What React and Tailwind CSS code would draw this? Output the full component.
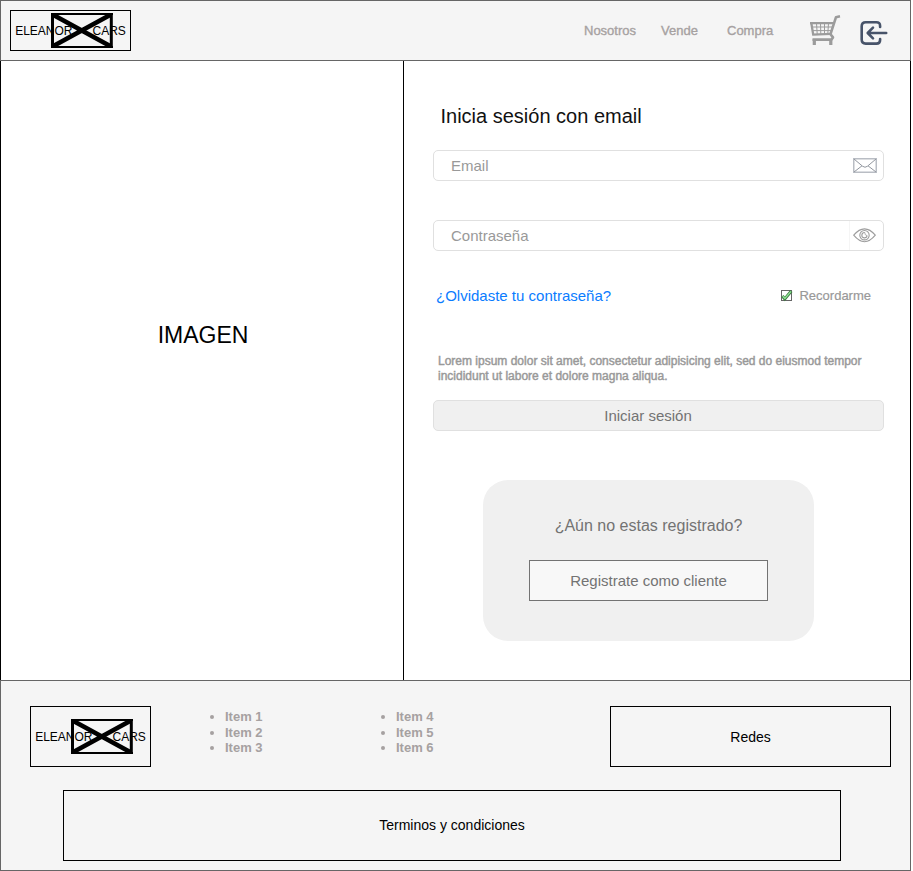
function Logo({ className, boxClass, boxHeight }) {
  return (
    <div className={`relative flex w-[121px] shrink-0 items-center justify-center gap-5 border border-black text-xs leading-none text-black ${className}`}>
      <span>ELEANOR</span>
      <span>CARS</span>
      <svg className={`absolute left-[40px] ${boxClass}`} width="62" height={boxHeight} viewBox={`0 0 62 ${boxHeight}`} fill="none" stroke="black">
        <path d={`M1.5 1.5L60 ${boxHeight - 1.5}M60 1.5L1.5 ${boxHeight - 1.5}`} strokeWidth="4.6" />
        <path d={`M1.5 0V${boxHeight}M60.3 0V${boxHeight}`} strokeWidth="3" />
        <path d={`M0 1H62M0 ${boxHeight - 1}H62`} strokeWidth="2" />
      </svg>
    </div>
  );
}

function CartIcon() {
  return (
    <svg width="32" height="32" viewBox="0 0 32 32" fill="none" stroke="#9b9b9b">
      <path d="M31 2.3L27 3.2L21.5 20.2L24 23.4L22.5 25.6H3.5" strokeWidth="2.6" strokeLinejoin="round" />
      <path d="M1 9.2H25M2.3 9L4.2 20.6L22 19.8" strokeWidth="2.3" />
      <path d="M7.5 9L8.2 20M11.5 9L11.8 20M15.5 9V20M19.5 9L18.8 20M3 13H23M3.5 16.6H22" strokeWidth="1" />
      <path d="M5.3 25V31M21.8 25V31" strokeWidth="3.2" />
    </svg>
  );
}

function LoginIcon() {
  return (
    <svg width="28" height="26" viewBox="0 0 28 26" fill="none" stroke="#475369" strokeWidth="2.6" strokeLinecap="round" strokeLinejoin="round">
      <path d="M20.1 7V5.9Q20.1 2.2 16.4 2.2H5.7Q1.7 2.2 1.7 6.2V19.6Q1.7 23.6 5.7 23.6H16.4Q20.1 23.6 20.1 19.9V19" />
      <path d="M26.2 13H8M13 7.7L7.7 13L13 18.3" />
    </svg>
  );
}

function MailIcon() {
  return (
    <svg width="24" height="15" viewBox="0 0 24 15" fill="none" stroke="#92979f">
      <rect x=".75" y=".75" width="22.5" height="13.5" strokeWidth="1.5" stroke="#b9bdc4" />
      <path d="M1 1L9.5 8.2Q12 10.3 14.5 8.2L23 1M1 14L9 7.8M23 14L15 7.8" strokeWidth="1" />
    </svg>
  );
}

function EyeIcon() {
  return (
    <svg width="23" height="15" viewBox="0 0 23 15" fill="none" stroke="#9c9c9c">
      <path d="M.7 7.2Q11.5-5.4 22.3 7.2Q11.5 20.2.7 7.2Z" strokeWidth="1.1" />
      <circle cx="11.5" cy="7.2" r="4.7" strokeWidth="1.1" />
      <path d="M11.8 4.5A2.7 2.7 0 1 0 14.2 7.7" strokeWidth="1.1" />
      <path d="M11.8 4.5Q11.5 7.3 14.2 7.7" strokeWidth=".8" />
    </svg>
  );
}

function CheckIcon() {
  return (
    <svg width="13" height="13" viewBox="0 0 13 13" fill="none">
      <rect x="1.5" y="1.5" width="10" height="10" stroke="#666" />
      <path d="M2.3 7L4.8 10L11.3 2" stroke="#3f7a43" strokeWidth="3" />
      <path d="M2.7 7.2L4.9 9.5L11 2.3" stroke="#91e896" strokeWidth="1.3" />
    </svg>
  );
}

function ItemList({ items, className }) {
  return (
    <ul className={`list-disc pl-[13px] text-[13px] font-bold leading-[15.6px] text-[#a6a1a1] ${className}`}>
      {items.map((item) => (
        <li key={item}>{item}</li>
      ))}
    </ul>
  );
}

export default function App() {
  return (
    <div className="flex h-[871px] w-[911px] flex-col overflow-hidden bg-white font-['Liberation_Sans',Arial,sans-serif]">
      <header className="flex h-[61px] shrink-0 border border-[#666] bg-[#f5f5f5]">
        <Logo className="ml-[9px] mt-[9px] h-[41px]" boxClass="top-[2px]" boxHeight={35} />
        <nav className="ml-[453px] flex pt-[22px] text-[13px] leading-[15px] text-[#a6a1a1] [-webkit-text-stroke:0.35px_#a6a1a1]">
          <a className="w-[77px]">Nosotros</a>
          <a className="w-[66px]">Vende</a>
          <a className="w-[82px]">Compra</a>
        </nav>
        <div className="mt-[13px]"><CartIcon /></div>
        <div className="ml-[19px] mt-[19px]"><LoginIcon /></div>
      </header>

      <main className="flex h-[619px] shrink-0 border-x border-black">
        <section className="flex w-[403px] shrink-0 justify-center border-r border-black pl-0.5 pt-[261px] text-[23px] leading-[27px]">
          IMAGEN
        </section>
        <section className="flex flex-1 flex-col pl-[29px] pr-[26px] pt-[43px]">
          <h1 className="pl-[7.5px] text-xl leading-6 text-[#111]">Inicia sesión con email</h1>

          <div className="mt-[22px] flex h-[31px] items-center justify-between rounded-[5px] border border-[#e0e0e0] pl-[17px] pr-1.5 text-[15px] text-[#999]">
            <span className="pt-0.5">Email</span>
            <MailIcon />
          </div>
          <div className="mt-[39px] flex h-[31px] items-center justify-between rounded-[5px] border border-[#e0e0e0] pl-[17px] text-[15px] text-[#999]">
            <span className="pt-0.5">Contraseña</span>
            <span className="flex h-full w-[34px] items-center border-l border-[#f5f5f5] pl-[3px]"><EyeIcon /></span>
          </div>

          <div className="mt-9 flex items-start justify-between pl-[3px] pr-[13px]">
            <a className="text-[15px] leading-[18px] text-[#0a7cff]">¿Olvidaste tu contraseña?</a>
            <label className="flex items-center gap-1.5 pt-px text-[13px] leading-[15px] text-[#999] [-webkit-text-stroke:0.2px_#999]">
              <CheckIcon />
              Recordarme
            </label>
          </div>

          <p className="mt-[49px] whitespace-nowrap pl-[5px] text-xs leading-[15px] text-[#999] [-webkit-text-stroke:0.45px_#999]">
            Lorem ipsum dolor sit amet, consectetur adipisicing elit, sed do eiusmod tempor<br />
            incididunt ut labore et dolore magna aliqua.
          </p>

          <button className="mt-4 h-[31px] shrink-0 rounded-[5px] border border-[#e0e0e0] bg-[#f0f0f0] pr-[21px] text-[15px] leading-[18px] text-[#737373]">
            Iniciar sesión
          </button>

          <div className="ml-[50px] mt-[49px] flex h-[161px] w-[331px] shrink-0 flex-col items-center rounded-[25px] bg-[#f0f0f0] pt-[36px] text-[#737373]">
            <p className="text-base leading-[19px]">¿Aún no estas registrado?</p>
            <button className="mt-[25px] h-[41px] w-[239px] border border-[#737373] bg-[#f8f8f8] text-[15px] leading-[18px]">
              Registrate como cliente
            </button>
          </div>
        </section>
      </main>

      <footer className="h-[191px] shrink-0 border border-[#666] bg-[#f5f5f5]">
        <div className="flex pl-[29px] pt-[25px]">
          <Logo className="h-[61px]" boxClass="top-[12px]" boxHeight={35} />
          <ItemList className="ml-[61px] mt-[3px] w-[171px]" items={["Item 1", "Item 2", "Item 3"]} />
          <ItemList className="mt-[3px] w-[227px]" items={["Item 4", "Item 5", "Item 6"]} />
          <div className="flex h-[61px] w-[281px] items-center justify-center border border-black text-sm">Redes</div>
        </div>
        <div className="ml-[62px] mt-[23px] flex h-[71px] w-[778px] items-center justify-center border border-black pb-0.5 text-sm">
          Terminos y condiciones
        </div>
      </footer>
    </div>
  );
}
